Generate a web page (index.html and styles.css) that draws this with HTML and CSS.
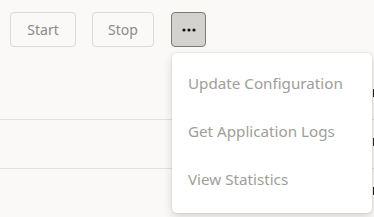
FILE: index.html
```html
<!DOCTYPE html>
<html>
<head>
<meta charset="utf-8">
<link rel="stylesheet" href="styles.css">
</head>
<body>
<div class="page">
  <div class="toolbar">
    <button class="btn btn-start" disabled>Start</button>
    <button class="btn btn-stop" disabled>Stop</button>
    <button class="btn btn-more" aria-label="More actions">
      <svg width="14" height="4" viewBox="0 0 14 4"><circle cx="2" cy="2" r="1.6"/><circle cx="7" cy="2" r="1.6"/><circle cx="12" cy="2" r="1.6"/></svg>
    </button>
  </div>
  <div class="table">
    <div class="row"><div class="cell-main"></div><div class="cell-side"><span class="mark"></span></div></div>
    <div class="row"><div class="cell-main"></div><div class="cell-side"><span class="mark"></span></div></div>
    <div class="row last"><div class="cell-main"></div><div class="cell-side"><span class="mark"></span></div></div>
  </div>
  <ul class="menu">
    <li class="menu-item">Update Configuration</li>
    <li class="menu-item">Get Application Logs</li>
    <li class="menu-item">View Statistics</li>
  </ul>
</div>
</body>
</html>
```
FILE: styles.css
```css
html, body {
  margin: 0;
  padding: 0;
  background: #faf9f8;
  font-family: "Noto Sans", "Open Sans", sans-serif;
  overflow: hidden;
}
.page {
  position: relative;
  width: 374px;
  height: 217px;
}
.toolbar {
  display: flex;
  gap: 16px;
  padding: 12px 0 0 10px;
  height: 35px;
}
.btn {
  height: 35px;
  box-sizing: border-box;
  border: 1px solid #dcdad7;
  border-radius: 4px;
  background: #faf9f8;
  color: #8d8a86;
  font-family: inherit;
  font-size: 14px;
  padding: 0;
  margin: 0;
}
.btn-start { width: 66px; }
.btn-stop { width: 62px; }
.btn-more {
  width: 35px;
  margin-left: 1px;
  background: #d4d2cf;
  border-color: #7d7a76;
  display: flex;
  align-items: center;
  justify-content: center;
}
.btn-more svg { fill: #161513; display: block; }
.table {
  margin-top: 24px;
}
.row {
  display: flex;
  height: 49px;
  box-sizing: border-box;
  border-bottom: 1px solid #e2e0dd;
}
.row.last { border-bottom: none; }
.cell-main { width: 373px; flex: none; }
.cell-side {
  display: flex;
  align-items: center;
  height: 44px;
}
.mark {
  display: block;
  width: 1px;
  height: 8px;
  background: #2a2826;
}
.menu {
  position: absolute;
  left: 172px;
  top: 53px;
  width: 200px;
  margin: 0;
  padding: 6px 0 10px;
  list-style: none;
  background: #ffffff;
  border-radius: 5px;
  box-shadow: 0 0 0 1px rgba(0,0,0,0.05), 0 4px 10px rgba(0,0,0,0.14);
}
.menu-item {
  height: 48px;
  display: flex;
  align-items: center;
  padding-left: 16px;
  color: #a09d99;
  font-size: 15.2px;
}
```
